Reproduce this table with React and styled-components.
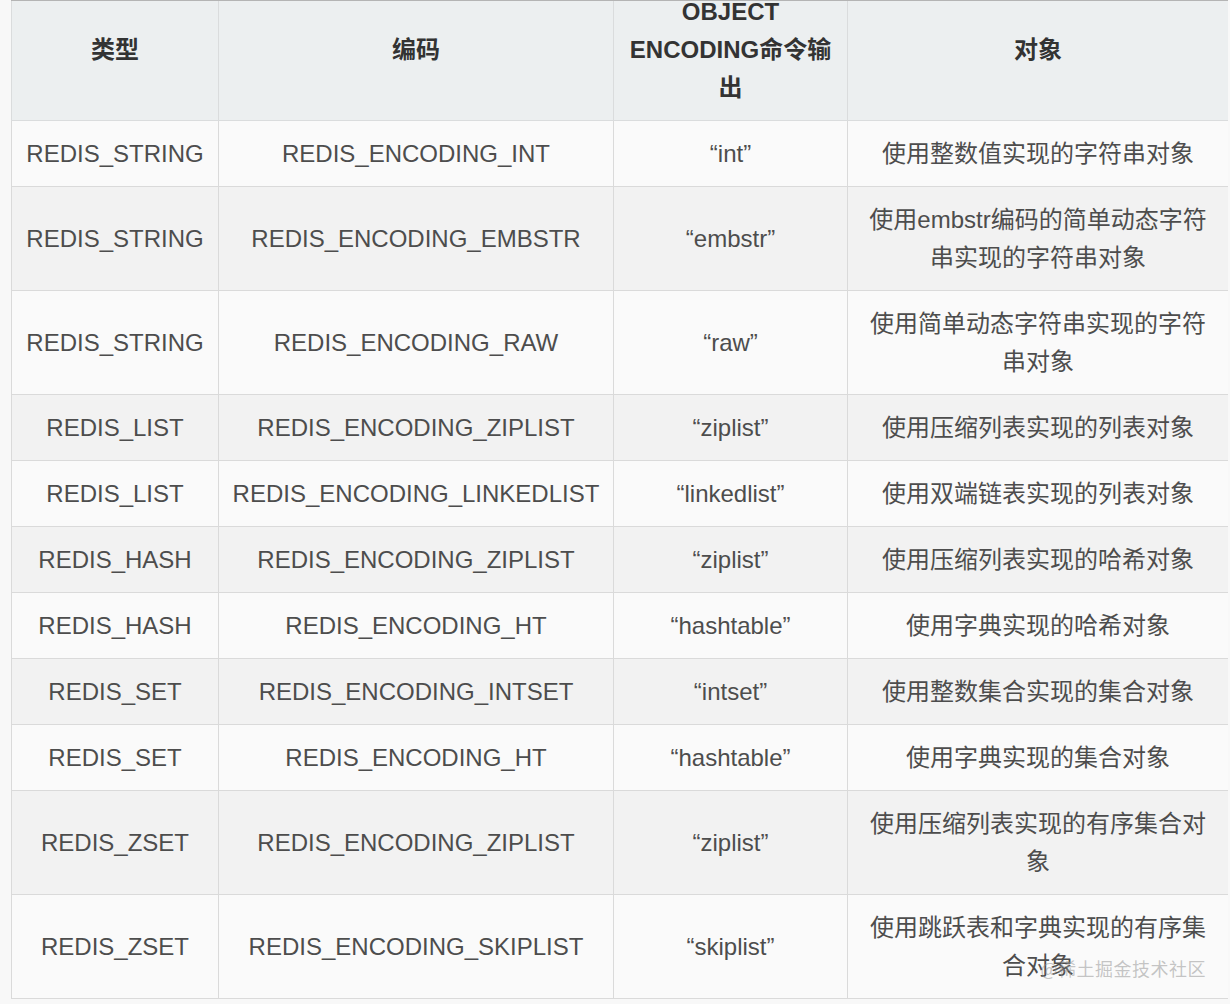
import React from "react"
import styled, { createGlobalStyle } from "styled-components"

const GlobalStyle = createGlobalStyle`
  html, body {
    margin: 0;
    padding: 0;
    background: #f8f8f8;
  }
  body {
    font-family: "Liberation Sans", "Noto Sans CJK SC", sans-serif;
  }
`;

/*
* page frame, the header row is cut by the top edge of the shot
*/
const Page = styled.div`
  position: relative;
  width: 1230px;
  height: 1004px;
  overflow: hidden;
  background: #f8f8f8;
`;
const Clip = styled.div`
  margin-left: 11px;
  width: 1217px;
  border-top: 1px solid #b4b4b4;
  overflow: hidden;
`;
const Table = styled.table`
  margin-top: -23px;
  width: 1217px;
  border-collapse: collapse;
  table-layout: fixed;
  font-size: 24px;
  line-height: 38px;
  color: #4d4d4d;
`;
const Th = styled.th`
  padding: 14px 12px 13px;
  border: 1px solid #dadcdd;
  background: #eceff0;
  color: #333;
  font-weight: bold;
  text-align: center;
  vertical-align: middle;
`;
const Row = styled.tr`
  background: ${props => props.shaded ? '#f2f2f2' : '#fafafa'};
`;
const Td = styled.td`
  padding: 14px 12px 13px;
  border: 1px solid #dadada;
  text-align: center;
  vertical-align: middle;
`;
const Watermark = styled.div`
  position: absolute;
  right: 24px;
  bottom: 24px;
  font-size: 18px;
  line-height: 24px;
  color: rgba(150, 150, 150, 0.55);
  font-family: "Noto Sans CJK SC", sans-serif;
  letter-spacing: 0.5px;
`;

const rows = [
  ['REDIS_STRING', 'REDIS_ENCODING_INT', '“int”', '使用整数值实现的字符串对象'],
  ['REDIS_STRING', 'REDIS_ENCODING_EMBSTR', '“embstr”', '使用embstr编码的简单动态字符串实现的字符串对象'],
  ['REDIS_STRING', 'REDIS_ENCODING_RAW', '“raw”', '使用简单动态字符串实现的字符串对象'],
  ['REDIS_LIST', 'REDIS_ENCODING_ZIPLIST', '“ziplist”', '使用压缩列表实现的列表对象'],
  ['REDIS_LIST', 'REDIS_ENCODING_LINKEDLIST', '“linkedlist”', '使用双端链表实现的列表对象'],
  ['REDIS_HASH', 'REDIS_ENCODING_ZIPLIST', '“ziplist”', '使用压缩列表实现的哈希对象'],
  ['REDIS_HASH', 'REDIS_ENCODING_HT', '“hashtable”', '使用字典实现的哈希对象'],
  ['REDIS_SET', 'REDIS_ENCODING_INTSET', '“intset”', '使用整数集合实现的集合对象'],
  ['REDIS_SET', 'REDIS_ENCODING_HT', '“hashtable”', '使用字典实现的集合对象'],
  ['REDIS_ZSET', 'REDIS_ENCODING_ZIPLIST', '“ziplist”', '使用压缩列表实现的有序集合对象'],
  ['REDIS_ZSET', 'REDIS_ENCODING_SKIPLIST', '“skiplist”', '使用跳跃表和字典实现的有序集合对象'],
]

export default function App() {
  return (
    <Page>
      <GlobalStyle />
      <Clip>
        <Table>
          <colgroup>
            <col style={{ width: 207 }} />
            <col style={{ width: 395 }} />
            <col style={{ width: 234 }} />
            <col style={{ width: 381 }} />
          </colgroup>
          <thead>
            <tr>
              <Th>类型</Th>
              <Th>编码</Th>
              <Th>OBJECT ENCODING命令输出</Th>
              <Th>对象</Th>
            </tr>
          </thead>
          <tbody>
            {rows.map((r, i) => (
              <Row key={i} shaded={i % 2 === 1}>
                {r.map((c, j) => <Td key={j}>{c}</Td>)}
              </Row>
            ))}
          </tbody>
        </Table>
      </Clip>
      <Watermark>@稀土掘金技术社区</Watermark>
    </Page>
  )
}
